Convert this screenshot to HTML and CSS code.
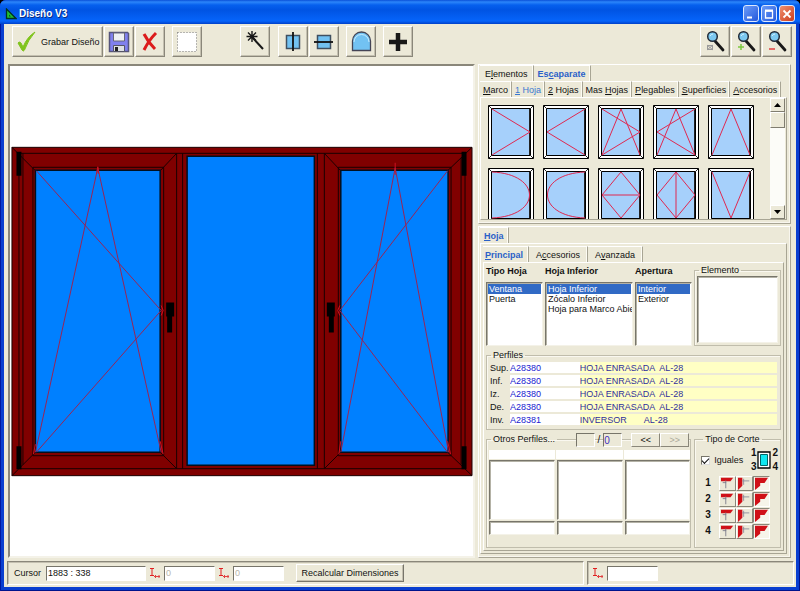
FILE: index.html
```html
<!DOCTYPE html>
<html lang="es">
<head>
<meta charset="utf-8">
<title>Diseño V3</title>
<link rel="stylesheet" href="styles.css">
</head>
<body>
<svg class="defs" aria-hidden="true">
  <defs>
    <symbol id="pane" viewBox="0 0 46 54">
      <path d="M.5 .5h45v53H.5z" fill="#fff" stroke="#000"/>
      <path d="M3.500 3.500h39v47h-39z" fill="#a6d0fb" stroke="#000"/>
      <path d="M41.500 4v46M.5 .5l3 3M45.500 .5l-3 3M.5 53.500l3-3M45.500 53.500l-3-3" fill="none" stroke="#222"/>
    </symbol>
    <symbol id="dim" viewBox="0 0 12 10">
      <path d="M1 .5h4M3 .5v7M1 7.500h4" stroke="#e02020" fill="none"/>
      <path d="M5 8.500h6M6.500 7v3M10 7v3" stroke="#e04040" fill="none"/>
    </symbol>
    <symbol id="lens" viewBox="0 0 28 28">
      <path d="M14 13l8 9" stroke="#181818" stroke-width="2.800" stroke-linecap="round"/>
      <circle cx="11.500" cy="8.500" r="4.800" fill="#7cc8f0" stroke="#222b38" stroke-width="1.500"/>
      <path d="M9 8q1-2 3-2" stroke="#d6f2ff" fill="none"/>
    </symbol>
    <symbol id="cut-a" viewBox="0 0 17 15"><path d="M1 1h14l-3 4H1z" fill="#d01018"/><path d="M6.500 4v9M3 6.500h4" stroke="#778" fill="none"/></symbol>
    <symbol id="cut-b" viewBox="0 0 17 15"><path d="M1 1h5v9l-5 5z" fill="#d01018"/><path d="M6 4.500h8M7.500 2v7" stroke="#889" fill="none"/></symbol>
    <symbol id="cut-c" viewBox="0 0 17 15"><path d="M1 1h15l-4 6H7v3l-6 5z" fill="#d01018"/></symbol>
  </defs>
</svg>
<div class="window">
  <header class="titlebar">
    <svg class="app-icon" viewBox="0 0 12 12"><path d="M1.500 1v9.500H11z" fill="#20c030" stroke="#032" stroke-width="1.300"/><path d="M4 6.500v2h2z" fill="#043"/></svg>
    <h1>Diseño V3</h1>
    <button class="win-btn" aria-label="Minimizar"><svg viewBox="0 0 14 14"><path d="M3 10.500h5" stroke="#fff" stroke-width="2"/></svg></button>
    <button class="win-btn" aria-label="Maximizar"><svg viewBox="0 0 14 14"><path d="M3 4h8M3.500 4v7h7V4" fill="none" stroke="#fff" stroke-width="1.300"/><path d="M3 3.500h8" stroke="#fff" stroke-width="2"/></svg></button>
    <button class="win-btn close" aria-label="Cerrar"><svg viewBox="0 0 14 14"><path d="M3.500 3.500l7 7M10.500 3.500l-7 7" stroke="#fff" stroke-width="1.800"/></svg></button>
  </header>

  <div class="toolbar">
    <div class="group"><button class="tool wide"><svg viewBox="0 0 28 28"><path d="M5 15q1-2 3 0l2 4Q14 9 22 4 15 12 11.500 22q-1 2-2.500 0z" fill="#80c41c" stroke="#80c41c"/></svg>Grabar Diseño</button>
      <button class="tool" aria-label="Guardar"><svg viewBox="0 0 28 28"><path d="M4.500 4.500h18l1 1v18h-19z" fill="#8080ee" stroke="#55557c" stroke-width="1.500"/><path d="M8.500 5h11v8h-11z" fill="#eef0f4" stroke="#667"/><path d="M8.500 17.500h11v6h-11z" fill="#dde0e4" stroke="#556"/><path d="M10 19h3v4h-3z" fill="#222"/></svg></button>
      <button class="tool" aria-label="Cancelar"><svg viewBox="0 0 28 28"><path d="M8 6q4 8 11 15M20 5q-7 7-12 17" fill="none" stroke="#dc1c1c" stroke-width="3"/></svg></button></div>
    <div class="group"><button class="tool" aria-label="Selección"><svg viewBox="0 0 28 28"><path d="M4.500 4.500h19v19h-19z" fill="#fff" stroke="#777" stroke-dasharray="1 2"/></svg></button></div>
    <div class="group wand"><button class="tool" aria-label="Varita"><svg viewBox="0 0 28 28"><path d="M11 9l11 12" stroke="#181818" stroke-width="2"/><path d="M11 3v11M5.500 8.500h11M7 4.500l8 8M15 4.500l-8 8" stroke="#181818" stroke-width="1.400"/></svg></button></div>
    <div class="group"><button class="tool" aria-label="División vertical"><svg viewBox="0 0 28 28"><path d="M7.500 7.500h13v13h-13z" fill="#72c2f2" stroke="#405060" stroke-width="1.500"/><path d="M14 4v19" stroke="#111" stroke-width="1.800"/></svg></button>
      <button class="tool" aria-label="División horizontal"><svg viewBox="0 0 28 28"><path d="M7.500 7.500h13v13h-13z" fill="#72c2f2" stroke="#405060" stroke-width="1.500"/><path d="M4 14h19" stroke="#111" stroke-width="1.800"/></svg></button></div>
    <div class="group"><button class="tool" aria-label="Arco"><svg viewBox="0 0 28 28"><path d="M5.500 22.500V13a8.500 8.500 0 0 1 18 0v9.500z" fill="#72c2f2" stroke="#445" stroke-width="1.300"/><path d="M7 14a7.500 7.500 0 0 1 15 0" fill="none" stroke="#c8ecff"/></svg></button></div>
    <div class="group"><button class="tool" aria-label="Añadir"><svg viewBox="0 0 28 28"><path d="M14 5v18M5 14h18" stroke="#181818" stroke-width="4.500"/></svg></button></div>
    <div class="group zooms">
      <button class="tool" aria-label="Ajustar"><svg viewBox="0 0 28 28"><use href="#lens"/><path d="M6.500 17.500h5v4h-5zM6 17l6 5M12 17l-6 5" fill="none" stroke="#999"/></svg></button>
      <button class="tool" aria-label="Acercar"><svg viewBox="0 0 28 28"><use href="#lens"/><path d="M9 16v6M6 19h6" stroke="#7cc840" stroke-width="1.500"/></svg></button>
      <button class="tool" aria-label="Alejar"><svg viewBox="0 0 28 28"><use href="#lens"/><path d="M6 21h6" stroke="#e04040" stroke-width="1.500"/></svg></button></div>
  </div>

  <main class="work">
    <section class="canvas">
      <svg viewBox="10 66 463 491" role="img" aria-label="Ventana">
        <g fill="#800000" stroke="#190000">
          <path d="M11.500 147.500h461v329h-461z"/>
          <path d="M18.500 153.500h447v316h-447z"/>
          <path d="M22.500 153.500v312M32.500 167.500h131v289h-131zM176.500 153.500v316M182.500 153.500v316M317.500 153.500v316M324.500 153.500v316M338.500 167.500h113v289h-113zM461.500 158v307" fill="none"/>
          <path d="M11.500 147.500l23 23M176.500 153.500l-16 17M11.500 476.500l23-23M176.500 469.500l-16-16M472.500 147.500l-24 23M324.500 153.500l16 17M472.500 476.500l-24-23M324.500 469.500l16-16" fill="none"/>
        </g>
        <g fill="#0080ff" stroke="#001020" stroke-width="1.500">
          <path d="M35 170.500h125v282.500H35zM187 156.500h127.500V466H187zM341 170.500h107.500v282.500H341z"/>
        </g>
        <g fill="none" stroke="#9a2454">
          <path d="M36 171l125 140L36 453M97.500 168L35 453M97.500 168L161 453"/>
          <path d="M448 171L340 311l108 142M395.500 168L341 453M395.500 168L449 453"/>
        </g>
        <path d="M97.500 167l-1 7M97.500 167l1 7M395.500 163v12M35 445l-2 10M160 442l3 13M341 442l-2 13M448 442l3 13M161 306l2 5-2 5M340 306l-2 5 2 5" fill="none" stroke="#d01020"/>
        <path d="M16 152h5v24h-5zM16 447h5v23h-5zM462 152h5v24h-5zM462 447h5v23h-5zM166 303h8v14h-2v16h-5v-16h-1zM327 303h8v14h-1v16h-5v-16h-2z" fill="#000"/>
      </svg>
    </section>

    <aside class="side">
      <section class="panel shelf">
        <nav class="tabs"><button>E<u>l</u>ementos</button><button class="on">Es<u>c</u>aparate</button></nav>
        <nav class="tabs sub"><button><u>M</u>arco</button><button class="cur"><u>1</u> Hoja</button><button><u>2</u> Hojas</button><button>Mas <u>H</u>ojas</button><button><u>P</u>legables</button><button><u>S</u>uperficies</button><button><u>A</u>ccesorios</button></nav>
        <div class="page gallery">
          <div class="panes">
            <svg viewBox="0 0 46 54"><use href="#pane"/><path d="M4 4l38 23L4 50"/></svg>
            <svg viewBox="0 0 46 54"><use href="#pane"/><path d="M42 4L4 27l38 23"/></svg>
            <svg viewBox="0 0 46 54"><use href="#pane"/><path d="M4 4l38 23L4 50L23 4l19 46"/></svg>
            <svg viewBox="0 0 46 54"><use href="#pane"/><path d="M4 50L23 4l19 46L4 27l38-23"/></svg>
            <svg viewBox="0 0 46 54"><use href="#pane"/><path d="M4 50L23 4l19 46"/></svg>
            <svg viewBox="0 0 46 54"><use href="#pane"/><path d="M4 4c50 2 50 44 0 46"/></svg>
            <svg viewBox="0 0 46 54"><use href="#pane"/><path d="M42 4c-50 2-50 44 0 46"/></svg>
            <svg viewBox="0 0 46 54"><use href="#pane"/><path d="M23 4l19 23-19 23L4 27zM4 27h38"/></svg>
            <svg viewBox="0 0 46 54"><use href="#pane"/><path d="M23 4l19 23-19 23L4 27zM23 4v46"/></svg>
            <svg viewBox="0 0 46 54"><use href="#pane"/><path d="M4 4l19 46L42 4"/></svg>
          </div>
          <div class="scroll"><button aria-label="Subir"><svg viewBox="0 0 7 4"><path d="M0 4l3.500-4L7 4z"/></svg></button><div class="thumb"></div><button class="down" aria-label="Bajar"><svg viewBox="0 0 7 4"><path d="M0 0l3.500 4L7 0z"/></svg></button></div>
        </div>
      </section>

      <section class="panel detail">
        <nav class="tabs"><button class="on"><u>H</u>oja</button></nav>
        <div class="page outer">
          <nav class="tabs sub2"><button class="on"><u>P</u>rincipal</button><button>A<u>c</u>cesorios</button><button>A<u>v</u>anzada</button></nav>
          <div class="page form">
            <div class="lists">
              <div class="field"><label for="tipo">Tipo Hoja</label><select id="tipo" size="5"><option selected>Ventana</option><option>Puerta</option></select></div>
              <div class="field"><label for="inferior">Hoja Inferior</label><select id="inferior" size="5"><option selected>Hoja Inferior</option><option>Zócalo Inferior</option><option>Hoja para Marco Abierto</option></select></div>
              <div class="field"><label for="apertura">Apertura</label><select id="apertura" size="5"><option selected>Interior</option><option>Exterior</option></select></div>
              <fieldset class="elem"><legend>Elemento</legend><div class="sunken"></div></fieldset>
            </div>
            <fieldset class="profiles"><legend>Perfiles</legend>
              <div class="row"><label for="p1">Sup.</label><input id="p1" value="A28380"><input class="desc" aria-label="Descripción superior" readonly value="HOJA ENRASADA  AL-28"></div>
              <div class="row"><label for="p2">Inf.</label><input id="p2" value="A28380"><input class="desc" aria-label="Descripción inferior" readonly value="HOJA ENRASADA  AL-28"></div>
              <div class="row"><label for="p3">Iz.</label><input id="p3" value="A28380"><input class="desc" aria-label="Descripción izquierda" readonly value="HOJA ENRASADA  AL-28"></div>
              <div class="row"><label for="p4">De.</label><input id="p4" value="A28380"><input class="desc" aria-label="Descripción derecha" readonly value="HOJA ENRASADA  AL-28"></div>
              <div class="row"><label for="p5">Inv.</label><input id="p5" value="A28381"><input class="desc" aria-label="Descripción inversor" readonly value="INVERSOR       AL-28"></div>
            </fieldset>
            <div class="lower">
              <fieldset class="others"><legend>Otros Perfiles...</legend>
                <div class="pager"><input aria-label="Actual"><span>/</span><input aria-label="Total" value="0"><div class="steps"><button>&lt;&lt;</button><button disabled>&gt;&gt;</button></div></div>
                <div class="heads"><i></i><i></i><i></i></div>
                <div class="boxes"><div class="sunken"></div><div class="sunken"></div><div class="sunken"></div></div>
                <div class="boxes small"><div class="sunken"></div><div class="sunken"></div><div class="sunken"></div></div>
              </fieldset>
              <fieldset class="cuts"><legend>Tipo de Corte</legend>
                <div class="same"><label><input type="checkbox" checked>Iguales</label>
                  <div class="corners"><div><b>1</b><b>3</b></div><svg viewBox="0 0 14 18"><path d="M1 1h12v16H1z" fill="#fff" stroke="#000" stroke-width="1.300"/><path d="M3.500 3.500h7v11h-7z" fill="#10e8f0" stroke="#066"/></svg><div><b>2</b><b>4</b></div></div></div>
                <div class="cut-row"><b>1</b><button aria-label="1 A"><svg><use href="#cut-a"/></svg></button><button aria-label="1 B"><svg><use href="#cut-b"/></svg></button><button class="down" aria-label="1 C"><svg><use href="#cut-c"/></svg></button></div>
                <div class="cut-row"><b>2</b><button aria-label="2 A"><svg><use href="#cut-a"/></svg></button><button aria-label="2 B"><svg><use href="#cut-b"/></svg></button><button class="down" aria-label="2 C"><svg><use href="#cut-c"/></svg></button></div>
                <div class="cut-row"><b>3</b><button aria-label="3 A"><svg><use href="#cut-a"/></svg></button><button aria-label="3 B"><svg><use href="#cut-b"/></svg></button><button class="down" aria-label="3 C"><svg><use href="#cut-c"/></svg></button></div>
                <div class="cut-row"><b>4</b><button aria-label="4 A"><svg><use href="#cut-a"/></svg></button><button aria-label="4 B"><svg><use href="#cut-b"/></svg></button><button class="down" aria-label="4 C"><svg><use href="#cut-c"/></svg></button></div>
              </fieldset>
            </div>
          </div>
        </div>
      </section>
    </aside>
  </main>

  <footer class="status">
    <div class="cell">
      <label for="cursor">Cursor</label><input id="cursor" class="long" value="1883 : 338">
      <svg class="dim"><use href="#dim"/></svg><input class="ghost" aria-label="Dimensión X" value="0">
      <svg class="dim"><use href="#dim"/></svg><input class="ghost" aria-label="Dimensión Y" value="0">
      <button class="recalc">Recalcular Dimensiones</button>
    </div>
    <div class="cell"><svg class="dim"><use href="#dim"/></svg><input aria-label="Dimensión"></div>
  </footer>
</div>
</body>
</html>
```
FILE: styles.css
```css
* { box-sizing: border-box; }
body {
  margin: 0;
  background: #000;
  font: 9px/12px "Liberation Sans", Arial, sans-serif;
  color: #111;
}
button, input, select {
  font: inherit;
  color: inherit;
  margin: 0;
  padding: 0;
  border: 0;
  border-radius: 0;
  background: none;
  min-width: 0;
}
svg { display: block; }
.defs { position: absolute; width: 0; height: 0; }
u { text-underline-offset: 1px; }

.window {
  display: flex;
  flex-direction: column;
  height: 100vh;
  padding: 0 4px 4px;
  background: #0a3fd0;
  border-radius: 6px 6px 0 0;
  box-shadow: inset 1px 0 #0018a0, inset -1px -1px #00138c;
}
.titlebar {
  display: flex;
  align-items: center;
  gap: 2px;
  height: 24px;
  margin: 0 -4px;
  padding: 3px 5px 0;
  border-radius: 6px 6px 0 0;
  background: linear-gradient(#0a50d8, #2c86fa 2px, #0660ee 5px, #0054e3 10px, #0460f4 18px, #0664fa 21px, #0040c8);
}
.app-icon { width: 12px; height: 12px; }
.titlebar h1 {
  flex: 1;
  margin: 0;
  font-size: 10px;
  color: #fff;
  text-shadow: 1px 1px #0a2c80;
}
.win-btn {
  width: 16px;
  height: 17px;
  border: 1px solid #dce8ff;
  border-radius: 3px;
  background: linear-gradient(135deg, #6c9cf8, #2458dc);
}
.win-btn.close { background: linear-gradient(135deg, #f09070, #cc3c1c); }

.toolbar {
  display: flex;
  gap: 7px;
  padding: 2px 4px 0 8px;
  height: 40px;
  background: #ece9d8;
}
.group { display: flex; gap: 1px; }
.wand { margin: 0 1px 0 31px; }
.zooms { margin-left: auto; }
.tool {
  width: 30px;
  height: 31px;
  background: #ece9d8;
  border: 1px solid;
  border-color: #fff #8a877a #8a877a #fff;
  box-shadow: inset -1px -1px #c4c0b0;
}
.tool svg { width: 28px; height: 28px; }
.tool.wide {
  display: flex;
  align-items: center;
  width: 91px;
  white-space: nowrap;
}

.work {
  flex: 1;
  min-height: 0;
  display: grid;
  grid-template-columns: 467fr 313fr;
  gap: 3px;
  padding: 0 5px 0 4px;
  background: #ece9d8;
}
.canvas {
  min-width: 0;
  min-height: 0;
  background: #fff;
  border: 2px solid;
  border-color: #8a877a #f4f2e8 #f4f2e8 #8a877a;
}
.canvas svg { width: 100%; height: 100%; }
.side {
  min-width: 0;
  display: grid;
  grid-template-rows: 160px 1fr;
  gap: 2px;
}
.panel {
  min-width: 0;
  display: flex;
  flex-direction: column;
  border: 1px solid;
  border-color: #fff #a8a594 #a8a594 #fff;
  padding: 0 3px 3px 1px;
  box-shadow: inset -1px -1px #f8f6ee;
}
.tabs { display: flex; height: 16px; }
.tabs button {
  padding: 0 5px;
  white-space: nowrap;
  border-top: 1px solid #fff;
  border-right: 1px solid #a8a594;
  box-shadow: inset -1px 0 #fdfcf4;
}
.tabs .on { font-weight: bold; color: #2a60c8; padding: 0 4px; }
.tabs .cur { color: #3a78d0; }
.tabs.sub button { padding: 0 3px; }
.tabs.sub2 button { padding: 0 7px; }
.tabs.sub2 .on { padding: 0 5px 0 2px; }
.page {
  flex: 1;
  min-height: 0;
  border: 1px solid;
  border-color: #fff #a8a594 #a8a594 #fff;
}
.gallery { display: flex; justify-content: space-between; padding: 0 1px 0 7px; }
.panes {
  display: grid;
  grid-template-columns: repeat(5, 46px);
  grid-auto-rows: 54px;
  gap: 9px;
  padding-top: 7px;
  overflow: hidden;
}
.panes path { fill: none; stroke: #e02850; }
.scroll { width: 15px; display: flex; flex-direction: column; background: #fcfcf8; }
.scroll button, .thumb {
  display: grid;
  place-items: center;
  height: 14px;
  background: #ece9d8;
  border: 1px solid;
  border-color: #fff #807d70 #807d70 #fff;
}
.scroll button svg { width: 7px; height: 4px; }
.scroll .down { margin-top: auto; }
.thumb { height: 16px; }

.outer { display: flex; flex-direction: column; padding: 2px; }
.form { display: flex; flex-direction: column; padding: 1px 2px 2px; }
.lists {
  display: grid;
  grid-template-columns: 57fr 88fr 57fr 87fr;
  gap: 2px;
  height: 82px;
}
.field { display: flex; flex-direction: column; min-width: 0; }
.field label { font-weight: bold; height: 18px; line-height: 14px; }
select, .sunken {
  background: #fff;
  border: 1px solid;
  border-color: #77756a #f4f2e8 #f4f2e8 #77756a;
  box-shadow: inset 1px 1px #b4b2a6;
}
select { flex: 1; min-height: 0; padding: 1px; overflow: hidden; outline: 0; }
option { padding: 0 0 0 1px; min-height: 10px; height: 10px; line-height: 11px; }
option:checked { color: #fff; background: #316ac5 linear-gradient(#316ac5, #316ac5); }
fieldset {
  margin: 0;
  min-width: 0;
  border: 1px solid #c0bdac;
  box-shadow: inset 1px 1px #faf8f0;
  padding: 0 2px 2px;
}
legend { margin-left: 2px; padding: 0 2px; line-height: 12px; }
.elem .sunken { height: 67px; }
.profiles { margin-top: 3px; height: 81px; padding-right: 3px; }
.row {
  display: grid;
  grid-template-columns: 20px 70fr 198fr;
  height: 13px;
  align-items: center;
  padding-left: 1px;
}
.row input { height: 11px; background: #fff; color: #2020d0; }
.row .desc { background: #ffffc4; color: #30309c; }
.lower {
  flex: 1;
  display: grid;
  grid-template-columns: 206fr 87fr;
  gap: 3px;
  margin-top: 3px;
  min-height: 0;
}
.others { position: relative; padding: 0 0 0 2px; }
.pager {
  position: absolute;
  top: -12px;
  right: 1px;
  display: flex;
  align-items: center;
  gap: 3px;
}
.pager input {
  width: 19px;
  height: 14px;
  border: 1px solid;
  border-color: #77756a #fff #fff #77756a;
  background: #ece9d8;
  color: #4030c0;
}
.pager input, .pager span { font-size: 10px; }
.steps { display: flex; margin-left: 6px; }
.steps button {
  width: 29px;
  height: 14px;
  background: #ece9d8;
  border: 1px solid;
  border-color: #fff #8a877a #8a877a #fff;
}
.steps button:disabled { color: #aaa898; }
.heads, .boxes { display: grid; grid-template-columns: repeat(3, 1fr); gap: 2px; }
.heads { margin-top: 5px; gap: 1px; }
.heads i { height: 9px; background: #fff; }
.boxes .sunken { height: 60px; margin-top: 1px; }
.boxes.small .sunken { height: 14px; }
.cuts { padding-left: 6px; }
.same { display: flex; align-items: center; justify-content: space-between; height: 30px; }
.same label { display: flex; align-items: center; gap: 4px; }
.same input {
  appearance: none;
  width: 9px;
  height: 9px;
  background: #fff;
  border: 1px solid;
  border-color: #77756a #ddd #ddd #77756a;
}
.same input:checked::after {
  content: "";
  display: block;
  width: 6px;
  height: 3px;
  margin: 1px 0 0;
  border: solid #111;
  border-width: 0 0 1px 1px;
  transform: rotate(-45deg);
}
.corners { display: flex; align-items: center; gap: 1px; }
.corners b { display: block; line-height: 14px; }
.corners svg { width: 14px; height: 18px; }
.cut-row, .corners { font-size: 10px; }
.cut-row { display: flex; height: 16px; align-items: center; }
.cut-row b { width: 18px; padding-left: 4px; }
.cut-row button {
  width: 17px;
  height: 15px;
  border: 1px solid;
  border-color: #fff #8a877a #8a877a #fff;
}
.cut-row .down { border-color: #8a877a #fff #fff #8a877a; background: #f6f4ea; }
.cut-row svg { width: 15px; height: 13px; }

.status {
  display: grid;
  grid-template-columns: 577fr 207fr;
  gap: 3px;
  height: 29px;
  padding: 3px 2px 2px 3px;
  background: #ece9d8;
}
.cell {
  display: flex;
  align-items: center;
  padding-left: 6px;
  border: 1px solid;
  border-color: #8a877a #fff #fff #8a877a;
  box-shadow: inset 1px 1px #c4c0b0;
}
.cell input {
  width: 51px;
  height: 15px;
  padding-left: 1px;
  background: #fff;
  border: 1px solid;
  border-color: #77756a #fff #fff #77756a;
}
.cell .long { width: 100px; margin-left: 5px; }
.cell .ghost { color: #b8b6aa; }
.dim { width: 12px; height: 10px; margin: 0 3px; }
.cell:last-child { padding-left: 1px; }
.recalc {
  width: 108px;
  height: 18px;
  margin-left: 12px;
  white-space: nowrap;
  border: 1px solid;
  border-color: #fff #77756a #77756a #fff;
  box-shadow: inset -1px -1px #c4c0b0;
}
```
